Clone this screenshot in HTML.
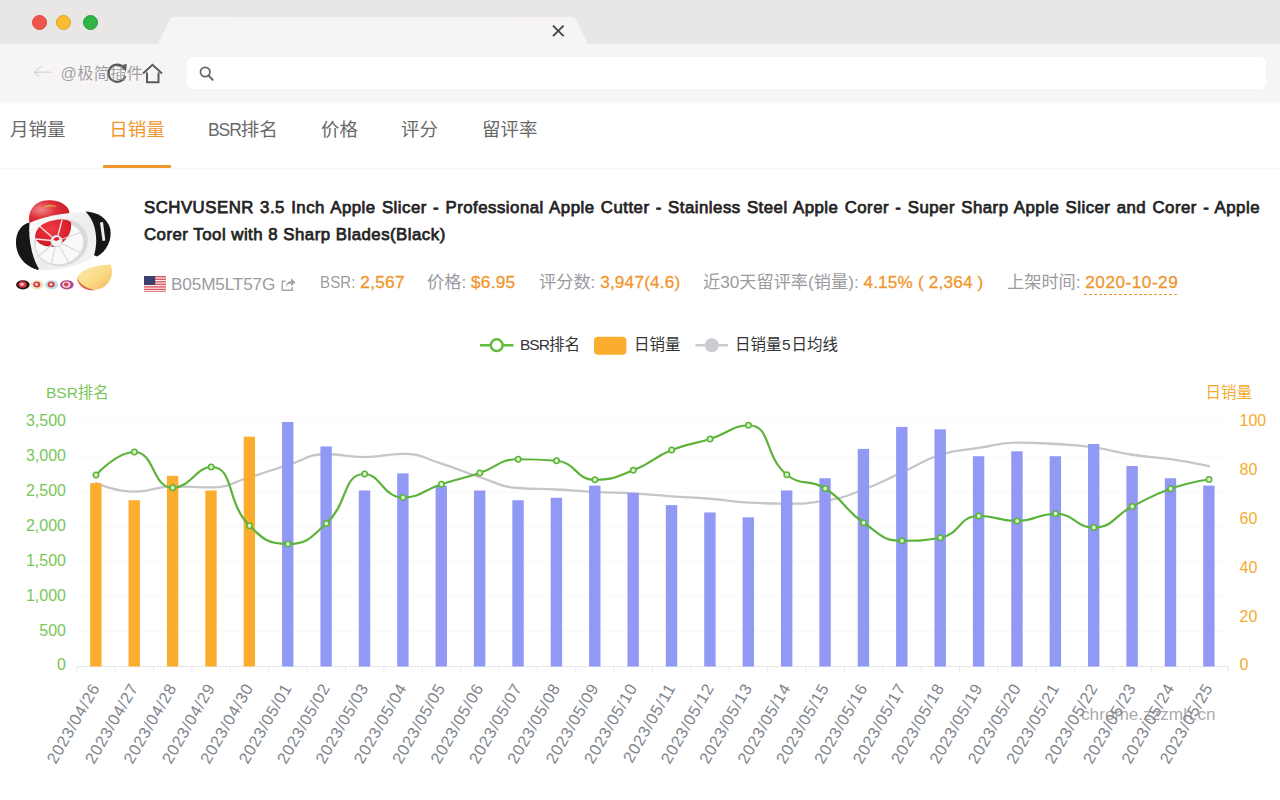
<!DOCTYPE html>
<html lang="zh-CN">
<head>
<meta charset="utf-8">
<title>日销量</title>
<style>
*{box-sizing:border-box;margin:0;padding:0}
html,body{width:1280px;height:800px;overflow:hidden;background:#fff}
body{position:relative;font-family:"Liberation Sans","Noto Sans CJK SC",sans-serif;color:#333}
.abs{position:absolute}
#titlebar{left:0;top:0;width:1280px;height:45px;background:#e9e7e6}
#toolbar{left:0;top:44px;width:1280px;height:60px;background:linear-gradient(#f7f4f6 0,#f7f4f6 57.500px,#fcfbfc 60px)}
#tab{left:0;top:0}
.dot{width:15px;height:15px;border-radius:50%;top:15.200px}
#addr{left:187px;top:57px;width:1078.500px;height:32.200px;background:#fff;border-radius:6px}
.wm{color:rgba(120,120,124,.75);white-space:nowrap}
#tabs{left:0;top:104px;width:1280px;height:65px;border-bottom:1px solid #f6f5f7;background:#fff}
.tab{top:14.300px;height:24px;line-height:24px;font-size:18.5px;color:#6a6a6a;white-space:nowrap}
.tab.on{color:#f0962e}
.tab .lat{font-size:17.500px;letter-spacing:-1.100px}
#ul{left:103px;top:164.700px;width:68px;height:3px;background:#f0962e;border-radius:1px}
#title .l1{text-align-last:justify;white-space:nowrap}
#title .l2{white-space:nowrap}
#title{left:144px;top:194px;width:1116px;font-weight:normal;-webkit-text-stroke:.75px #262626;font-size:16.8px;letter-spacing:.5px;line-height:27px;color:#222;text-align:justify}
.info{top:270px;height:24px;line-height:24px;font-size:17.2px;white-space:nowrap;color:#9b9b9f}
.o{color:#f0962e;letter-spacing:.5px;-webkit-text-stroke:.3px #f0962e}
.info .lat{display:inline-block;transform:scaleX(.885);transform-origin:0 50%;margin-right:-4.6px}
.lg{top:333px;height:24px;line-height:24px;font-size:15.5px;color:#333;white-space:nowrap}
svg.chart{position:absolute;left:0;top:360px}
svg text{font-family:"Liberation Sans","Noto Sans CJK SC",sans-serif}
.yl{fill:#78c757;font-size:16px}
.yr{fill:#f6ab2d;font-size:16px}
.tt{font-size:15.5px}
.xl{fill:#80848c;font-size:16.3px;letter-spacing:.8px}
</style>
</head>
<body>
<div id="titlebar" class="abs"></div>
<div id="toolbar" class="abs"></div>
<div id="addr" class="abs"></div>
<svg id="tab" class="abs" width="1280" height="110" viewBox="0 0 1280 110">
  <path d="M157.500 44.500 L170.800 18 Q171.500 16.800 173 16.800 L572 17.200 Q574.500 17.200 575.500 19 L588 44.500 Z" fill="#f7f4f7"/>
  <path d="M553 25.600 L563.600 36.200 M563.600 25.600 L553 36.200" stroke="#454547" stroke-width="1.9" fill="none"/>
  <!-- back arrow -->
  <path d="M34.500 72.300 L51 72.300 M41.500 66 L34.500 72.300 L39 76.500" stroke="#dcdadd" stroke-width="1.5" fill="none"/>
  <!-- reload -->
  <path d="M124 68 A8.600 8.600 0 1 0 125.300 76" stroke="#58585a" stroke-width="2.1" fill="none"/>
  <path d="M119.500 65.500 L126.800 64 L126 71.800 Z" fill="#58585a"/>
  <!-- home -->
  <path d="M143 73.500 L152.500 64.800 L162 73.500 M147 72.500 L147 82.300 L158.500 82.300 L158.500 72.500" stroke="#5a5a5c" stroke-width="2" fill="none" stroke-linejoin="miter"/>
  <!-- search -->
  <circle cx="205.200" cy="72" r="4.700" stroke="#666" stroke-width="1.8" fill="none"/>
  <path d="M208.700 75.600 L212.600 79.700" stroke="#666" stroke-width="2" stroke-linecap="round"/>
</svg>
<div class="abs dot" style="left:32px;background:#f2544e;border:1px solid #de4640"></div>
<div class="abs dot" style="left:56.300px;background:#fbbc2f;border:1px solid #dfa224"></div>
<div class="abs dot" style="left:83.100px;background:#2fb446;border:1px solid #279c3a"></div>
<div class="abs wm" style="left:60.500px;top:62px;font-size:16px;letter-spacing:.5px;line-height:24px;color:rgba(135,135,140,.78)">@极简插件</div>

<div id="tabs" class="abs">
  <div class="abs tab" style="left:10px">月销量</div>
  <div class="abs tab on" style="left:109.300px">日销量</div>
  <div class="abs tab" style="left:208px"><span class="lat">BSR</span>排名</div>
  <div class="abs tab" style="left:321px">价格</div>
  <div class="abs tab" style="left:401px">评分</div>
  <div class="abs tab" style="left:482px">留评率</div>
</div>
<div id="ul" class="abs"></div>

<svg class="abs" style="left:0;top:185px" width="130" height="120" viewBox="0 185 130 120">
  <defs>
    <radialGradient id="ap" cx="30%" cy="40%" r="80%"><stop offset="0" stop-color="#f08a8c"/><stop offset=".45" stop-color="#e0303a"/><stop offset="1" stop-color="#c21722"/></radialGradient>
    <radialGradient id="ap2" cx="45%" cy="35%" r="75%"><stop offset="0" stop-color="#ee3c45"/><stop offset=".7" stop-color="#d81f2b"/><stop offset="1" stop-color="#b9141f"/></radialGradient>
    <linearGradient id="rg" x1="0" y1="0" x2="1" y2="1"><stop offset="0" stop-color="#fdfdfd"/><stop offset=".55" stop-color="#ececee"/><stop offset="1" stop-color="#f7f7f8"/></linearGradient>
    <linearGradient id="sl" x1="0" y1="0" x2="1" y2="1"><stop offset="0" stop-color="#fceab0"/><stop offset=".55" stop-color="#fadb86"/><stop offset="1" stop-color="#f3b458"/></linearGradient>
    <filter id="sb" x="-10%" y="-10%" width="120%" height="120%"><feGaussianBlur stdDeviation=".4"/></filter>
  </defs>
  <g filter="url(#sb)">
  <!-- apple behind -->
  <path d="M29.500 223 C27 210 36 200.500 48 200.300 C60 200 70 206 69.500 214 L60 220 L36 224 Z" fill="url(#ap)"/>
  <path d="M43 208 C46 204 53 203.500 57 207 C53 206 47 206.500 43 208 Z" fill="#d8a44a"/>
  <!-- left black handle -->
  <path d="M30 222.500 C21 224 15.500 233 16 244 C16.500 256 25 266.500 38 270 L41 266 L31 224 Z" fill="#141414"/>
  <!-- right black handle -->
  <path d="M86 211.500 C97 212 107.500 218 110.300 229 C112 240 107 251 97 256.500 L91 254 L84 215 Z" fill="#141414"/>
  <path d="M100 222.500 L103 222 L105.300 240.500 L102.500 241 Z" fill="#ededed"/>
  <!-- white ring body -->
  <path d="M29.500 223 C42 217 64 212 86 212 C96 222 99 241 93.500 257 C84 264 58 272 39.500 270 C32 258 28 239 29.500 223 Z" fill="url(#rg)"/>
  <!-- inner opening -->
  <ellipse cx="61" cy="242.500" rx="27" ry="23.500" transform="rotate(-14 61 242.500)" fill="#d9d9dc"/>
  <ellipse cx="59.500" cy="243.500" rx="24" ry="20.500" transform="rotate(-14 59.500 243.500)" fill="#f9f9fa"/>
  <!-- apple inside -->
  <path d="M35.500 239 C33.500 229 43 221.500 57 219.800 C64 219 69 220 71 222.500 C72 231 68 239 61 243.500 L55 246.500 C47 247.500 39 245 35.500 239 Z" fill="url(#ap2)"/>
  <!-- blades -->
  <g stroke="#fae6e6" stroke-width="1.300" fill="none">
    <path d="M56.500 241 L40 226.500"/><path d="M56.500 241 L62 220"/><path d="M56.500 241 L35.500 239"/>
  </g>
  <g stroke="#d8d8dc" stroke-width="1.100" fill="none">
    <path d="M56.500 241 L82 232"/><path d="M56.500 241 L81 253"/><path d="M56.500 241 L69 263"/><path d="M56.500 241 L51 265"/><path d="M56.500 241 L38.500 256"/>
  </g>
  <circle cx="56.500" cy="241" r="5.600" fill="#f4f4f5" stroke="#cfcfd2" stroke-width="1"/>
  <path d="M53.300 240 A3.400 3.400 0 0 1 59.800 239.200 L56.500 241 Z" fill="#d6202d"/>
  <!-- slice -->
  <path d="M77 277 C81 270 94 265 110.500 264.500 C114 271 111.500 282 103 287.500 C94 291.500 83 290 78.500 284 Z" fill="url(#sl)"/>
  <path d="M77 277.500 C79.500 284 86 289 96 290 C88 291.500 78.500 288 77 277.500 Z" fill="#dd5e4c"/>
  <!-- thumbs -->
  <g>
    <ellipse cx="22.900" cy="284.800" rx="6.800" ry="4.600" fill="#2a1416"/><ellipse cx="22.500" cy="284.500" rx="4" ry="3.300" fill="#e23a46"/><ellipse cx="22" cy="284.300" rx="1.800" ry="1.500" fill="#f6c4c4"/>
    <ellipse cx="37.300" cy="284.800" rx="6.800" ry="4.600" fill="#eee8bc"/><ellipse cx="36.800" cy="284.600" rx="3.600" ry="3" fill="#d8404a"/><ellipse cx="36.500" cy="284.400" rx="1.500" ry="1.300" fill="#f4d6d6"/>
    <ellipse cx="51.700" cy="284.800" rx="6.800" ry="4.600" fill="#bde4ee"/><ellipse cx="51.200" cy="284.600" rx="3.600" ry="3" fill="#d8404a"/><ellipse cx="51" cy="284.400" rx="1.500" ry="1.300" fill="#f4d6d6"/>
    <ellipse cx="66.900" cy="284.800" rx="6.800" ry="4.600" fill="#b24a8c"/><ellipse cx="66.400" cy="284.600" rx="4" ry="3.200" fill="#f4dfe6"/><ellipse cx="66.200" cy="284.500" rx="2.300" ry="2" fill="#d8404a"/>
  </g>
  </g>
</svg>


<div id="title" class="abs"><div class="l1">SCHVUSENR 3.5 Inch Apple Slicer - Professional Apple Cutter - Stainless Steel Apple Corer - Super Sharp Apple Slicer and Corer - Apple</div><div class="l2"><span id="l2s">Corer Tool with 8 Sharp Blades(Black)</span></div></div>

<svg class="abs" style="left:143.700px;top:275.800px" width="22.200" height="16.700" viewBox="0 0 22.200 16.700">
  <rect width="22.200" height="16.700" fill="#fdf3f3"/>
  <g fill="#dc5563"><rect y="0" width="22.200" height="1.400"/><rect y="2.550" width="22.200" height="1.400"/><rect y="5.100" width="22.200" height="1.400"/><rect y="7.650" width="22.200" height="1.400"/><rect y="10.200" width="22.200" height="1.400"/><rect y="12.750" width="22.200" height="1.400"/><rect y="15.300" width="22.200" height="1.400"/></g>
  <rect width="11.200" height="9" fill="#3b416f"/>
</svg>
<div class="abs info" style="left:171px;top:271.600px;letter-spacing:-.15px">B05M5LT57G</div>
<svg class="abs" style="left:280px;top:276px" width="17" height="17" viewBox="0 0 17 17" fill="none" stroke="#a6a6aa" stroke-width="1.400">
  <path d="M5.500 5.300 L2.300 5.300 L2.300 14.300 L12.300 14.300 L12.300 11"/>
  <path d="M5.800 11.300 C6 7.600 8.200 5.300 11 5.100 L11 2.300 L15.600 6.300 L11 10.300 L11 7.600 C8.800 7.600 7 8.800 5.800 11.300 Z" fill="#a6a6aa" stroke="none"/>
</svg>
<div class="abs info" style="left:320px"><span class="lat">BSR:</span> <span class="o" style="letter-spacing:.3px">2,567</span></div>
<div class="abs info" style="left:427px">价格: <span class="o" style="letter-spacing:.3px">$6.95</span></div>
<div class="abs info" style="left:539px">评分数: <span class="o" style="letter-spacing:.2px">3,947(4.6)</span></div>
<div class="abs info" style="left:703px">近30天留评率(销量): <span class="o" style="letter-spacing:.17px">4.15% ( 2,364 )</span></div>
<div class="abs info" style="left:1007px">上架时间: <span class="o" id="dt">2020-10-29</span></div>
<div class="abs" style="left:1084px;top:293.600px;width:93px;height:0;border-top:1px dashed #f0962e"></div>

<!-- legend -->
<svg class="abs" style="left:470px;top:330px" width="280" height="30" viewBox="470 330 280 30">
  <line x1="480" x2="513.500" y1="345.200" y2="345.200" stroke="#62bb3f" stroke-width="2.600"/>
  <circle cx="496.700" cy="345.200" r="5.900" fill="#fff" stroke="#62bb3f" stroke-width="2.500"/>
  <rect x="594" y="336.800" width="32.400" height="18" rx="4" fill="#fbae2e"/>
  <line x1="695.500" x2="728" y1="345.200" y2="345.200" stroke="#cbccd1" stroke-width="2.600"/>
  <circle cx="711.800" cy="345.200" r="7" fill="#cbccd1"/>
</svg>
<div class="abs lg" style="left:520px"><span style="letter-spacing:-1px">BSR</span>排名</div>
<div class="abs lg" style="left:634px">日销量</div>
<div class="abs lg" style="left:735px">日销量<span style="letter-spacing:.8px;margin-left:.5px">5</span>日均线</div>

<svg class="chart" width="1280" height="440" viewBox="0 360 1280 440">
<line x1="76.8" x2="1228.2" y1="631.57" y2="631.57" stroke="#f9f9fb" stroke-width="1"/>
<line x1="76.8" x2="1228.2" y1="596.64" y2="596.64" stroke="#f9f9fb" stroke-width="1"/>
<line x1="76.8" x2="1228.2" y1="561.71" y2="561.71" stroke="#f9f9fb" stroke-width="1"/>
<line x1="76.8" x2="1228.2" y1="526.79" y2="526.79" stroke="#f9f9fb" stroke-width="1"/>
<line x1="76.8" x2="1228.2" y1="491.86" y2="491.86" stroke="#f9f9fb" stroke-width="1"/>
<line x1="76.8" x2="1228.2" y1="456.93" y2="456.93" stroke="#f9f9fb" stroke-width="1"/>
<line x1="76.8" x2="1228.2" y1="422.00" y2="422.00" stroke="#f9f9fb" stroke-width="1"/>
<line x1="76.8" x2="1228.2" y1="666.5" y2="666.5" stroke="#e6e7ec" stroke-width="1"/>
<line x1="76.80" x2="76.80" y1="666.5" y2="671.5" stroke="#e6e7ec" stroke-width="1"/>
<line x1="115.18" x2="115.18" y1="666.5" y2="671.5" stroke="#e6e7ec" stroke-width="1"/>
<line x1="153.56" x2="153.56" y1="666.5" y2="671.5" stroke="#e6e7ec" stroke-width="1"/>
<line x1="191.94" x2="191.94" y1="666.5" y2="671.5" stroke="#e6e7ec" stroke-width="1"/>
<line x1="230.32" x2="230.32" y1="666.5" y2="671.5" stroke="#e6e7ec" stroke-width="1"/>
<line x1="268.70" x2="268.70" y1="666.5" y2="671.5" stroke="#e6e7ec" stroke-width="1"/>
<line x1="307.08" x2="307.08" y1="666.5" y2="671.5" stroke="#e6e7ec" stroke-width="1"/>
<line x1="345.46" x2="345.46" y1="666.5" y2="671.5" stroke="#e6e7ec" stroke-width="1"/>
<line x1="383.84" x2="383.84" y1="666.5" y2="671.5" stroke="#e6e7ec" stroke-width="1"/>
<line x1="422.22" x2="422.22" y1="666.5" y2="671.5" stroke="#e6e7ec" stroke-width="1"/>
<line x1="460.60" x2="460.60" y1="666.5" y2="671.5" stroke="#e6e7ec" stroke-width="1"/>
<line x1="498.98" x2="498.98" y1="666.5" y2="671.5" stroke="#e6e7ec" stroke-width="1"/>
<line x1="537.36" x2="537.36" y1="666.5" y2="671.5" stroke="#e6e7ec" stroke-width="1"/>
<line x1="575.74" x2="575.74" y1="666.5" y2="671.5" stroke="#e6e7ec" stroke-width="1"/>
<line x1="614.12" x2="614.12" y1="666.5" y2="671.5" stroke="#e6e7ec" stroke-width="1"/>
<line x1="652.50" x2="652.50" y1="666.5" y2="671.5" stroke="#e6e7ec" stroke-width="1"/>
<line x1="690.88" x2="690.88" y1="666.5" y2="671.5" stroke="#e6e7ec" stroke-width="1"/>
<line x1="729.26" x2="729.26" y1="666.5" y2="671.5" stroke="#e6e7ec" stroke-width="1"/>
<line x1="767.64" x2="767.64" y1="666.5" y2="671.5" stroke="#e6e7ec" stroke-width="1"/>
<line x1="806.02" x2="806.02" y1="666.5" y2="671.5" stroke="#e6e7ec" stroke-width="1"/>
<line x1="844.40" x2="844.40" y1="666.5" y2="671.5" stroke="#e6e7ec" stroke-width="1"/>
<line x1="882.78" x2="882.78" y1="666.5" y2="671.5" stroke="#e6e7ec" stroke-width="1"/>
<line x1="921.16" x2="921.16" y1="666.5" y2="671.5" stroke="#e6e7ec" stroke-width="1"/>
<line x1="959.54" x2="959.54" y1="666.5" y2="671.5" stroke="#e6e7ec" stroke-width="1"/>
<line x1="997.92" x2="997.92" y1="666.5" y2="671.5" stroke="#e6e7ec" stroke-width="1"/>
<line x1="1036.30" x2="1036.30" y1="666.5" y2="671.5" stroke="#e6e7ec" stroke-width="1"/>
<line x1="1074.68" x2="1074.68" y1="666.5" y2="671.5" stroke="#e6e7ec" stroke-width="1"/>
<line x1="1113.06" x2="1113.06" y1="666.5" y2="671.5" stroke="#e6e7ec" stroke-width="1"/>
<line x1="1151.44" x2="1151.44" y1="666.5" y2="671.5" stroke="#e6e7ec" stroke-width="1"/>
<line x1="1189.82" x2="1189.82" y1="666.5" y2="671.5" stroke="#e6e7ec" stroke-width="1"/>
<line x1="1228.20" x2="1228.20" y1="666.5" y2="671.5" stroke="#e6e7ec" stroke-width="1"/>
<path d="M95.99 483.12 C95.99 483.12 115.04 491.68 134.37 491.68 C153.42 491.68 153.47 486.38 172.75 486.38 C191.85 486.38 192.26 487.40 211.13 487.40 C230.64 487.40 230.46 482.81 249.51 477.26 C268.84 471.62 268.60 470.81 287.89 465.03 C306.98 459.32 306.75 454.27 326.27 454.27 C345.13 454.27 345.47 457.21 364.65 457.21 C383.85 457.21 384.10 453.78 403.03 453.78 C422.48 453.78 422.49 457.78 441.41 463.56 C460.87 469.52 460.39 471.08 479.79 477.26 C498.77 483.30 498.62 486.49 518.17 488.01 C537.00 489.48 537.37 488.50 556.55 489.48 C575.75 490.46 575.73 490.95 594.93 491.93 C614.11 492.90 614.14 492.29 633.31 493.39 C652.52 494.50 652.49 494.98 671.69 496.33 C690.87 497.67 690.91 497.19 710.07 498.77 C729.29 500.36 729.21 501.70 748.45 502.69 C767.59 503.66 767.66 503.66 786.83 503.66 C806.04 503.66 806.39 503.66 825.21 500.73 C844.77 497.68 844.87 496.40 863.59 489.48 C883.25 482.22 882.83 481.03 901.97 472.37 C921.21 463.67 920.39 461.12 940.35 454.76 C958.77 448.89 959.48 450.98 978.73 447.92 C997.86 444.87 997.83 442.54 1017.11 442.54 C1036.21 442.54 1036.33 442.78 1055.49 444.00 C1074.71 445.23 1074.81 444.76 1093.87 447.43 C1113.19 450.14 1112.95 451.81 1132.25 454.76 C1151.33 457.68 1151.53 456.37 1170.63 459.16 C1189.91 461.99 1209.01 466.01 1209.01 466.01" fill="none" stroke="#c6c6ca" stroke-width="2.3" stroke-linecap="round"/>
<rect x="90.14" y="483.12" width="11.4" height="183.38" fill="#fbae2e"/>
<rect x="128.52" y="500.24" width="11.4" height="166.26" fill="#fbae2e"/>
<rect x="166.90" y="475.79" width="11.4" height="190.71" fill="#fbae2e"/>
<rect x="205.28" y="490.46" width="11.4" height="176.04" fill="#fbae2e"/>
<rect x="243.66" y="436.67" width="11.4" height="229.83" fill="#fbae2e"/>
<rect x="282.04" y="422.00" width="11.4" height="244.50" fill="#9299f5"/>
<rect x="320.42" y="446.45" width="11.4" height="220.05" fill="#9299f5"/>
<rect x="358.80" y="490.46" width="11.4" height="176.04" fill="#9299f5"/>
<rect x="397.18" y="473.35" width="11.4" height="193.15" fill="#9299f5"/>
<rect x="435.56" y="485.57" width="11.4" height="180.93" fill="#9299f5"/>
<rect x="473.94" y="490.46" width="11.4" height="176.04" fill="#9299f5"/>
<rect x="512.32" y="500.24" width="11.4" height="166.26" fill="#9299f5"/>
<rect x="550.70" y="497.79" width="11.4" height="168.71" fill="#9299f5"/>
<rect x="589.08" y="485.57" width="11.4" height="180.93" fill="#9299f5"/>
<rect x="627.46" y="492.90" width="11.4" height="173.60" fill="#9299f5"/>
<rect x="665.84" y="505.13" width="11.4" height="161.37" fill="#9299f5"/>
<rect x="704.22" y="512.47" width="11.4" height="154.03" fill="#9299f5"/>
<rect x="742.60" y="517.36" width="11.4" height="149.14" fill="#9299f5"/>
<rect x="780.98" y="490.46" width="11.4" height="176.04" fill="#9299f5"/>
<rect x="819.36" y="478.24" width="11.4" height="188.26" fill="#9299f5"/>
<rect x="857.74" y="448.89" width="11.4" height="217.61" fill="#9299f5"/>
<rect x="896.12" y="426.89" width="11.4" height="239.61" fill="#9299f5"/>
<rect x="934.50" y="429.34" width="11.4" height="237.16" fill="#9299f5"/>
<rect x="972.88" y="456.23" width="11.4" height="210.27" fill="#9299f5"/>
<rect x="1011.26" y="451.34" width="11.4" height="215.16" fill="#9299f5"/>
<rect x="1049.64" y="456.23" width="11.4" height="210.27" fill="#9299f5"/>
<rect x="1088.02" y="444.00" width="11.4" height="222.50" fill="#9299f5"/>
<rect x="1126.40" y="466.01" width="11.4" height="200.49" fill="#9299f5"/>
<rect x="1164.78" y="478.24" width="11.4" height="188.26" fill="#9299f5"/>
<rect x="1203.16" y="485.57" width="11.4" height="180.93" fill="#9299f5"/>
<path d="M95.99 475.00 C95.99 475.00 116.70 452.00 134.37 452.00 C155.08 452.00 151.80 487.75 172.75 487.75 C190.18 487.75 196.42 467.00 211.13 467.00 C234.80 467.00 225.61 501.77 249.51 525.75 C263.99 540.27 268.93 544.00 287.89 544.00 C307.31 544.00 310.54 537.85 326.27 523.50 C348.92 502.85 342.32 474.00 364.65 474.00 C380.70 474.00 382.85 497.50 403.03 497.50 C421.23 497.50 422.08 490.42 441.41 484.25 C460.46 478.17 460.78 479.19 479.79 473.00 C499.16 466.69 498.41 459.25 518.17 459.25 C536.79 459.25 538.40 459.25 556.55 460.75 C576.78 462.42 574.97 479.75 594.93 479.75 C613.35 479.75 615.01 477.34 633.31 470.25 C653.39 462.47 651.70 458.14 671.69 450.00 C690.08 442.51 691.08 445.12 710.07 439.00 C729.46 432.75 733.32 425.25 748.45 425.25 C771.70 425.25 763.58 455.59 786.83 474.75 C801.96 487.22 808.24 477.89 825.21 488.50 C846.62 501.89 842.55 508.43 863.59 522.75 C880.93 534.55 881.86 540.75 901.97 540.75 C920.24 540.75 922.46 540.75 940.35 537.75 C960.84 534.31 958.29 516.00 978.73 516.00 C996.67 516.00 998.01 521.00 1017.11 521.00 C1036.39 521.00 1036.71 513.75 1055.49 513.75 C1075.09 513.75 1075.36 527.50 1093.87 527.50 C1113.74 527.50 1112.73 516.35 1132.25 506.50 C1151.11 496.98 1150.78 495.73 1170.63 488.75 C1189.16 482.23 1209.01 479.50 1209.01 479.50" fill="none" stroke="#5cb33a" stroke-width="2.2" stroke-linecap="round" stroke-linejoin="round"/>
<circle cx="95.99" cy="475.00" r="2.7" fill="#d9f6ca" stroke="#5cb33a" stroke-width="1.6"/>
<circle cx="134.37" cy="452.00" r="2.7" fill="#d9f6ca" stroke="#5cb33a" stroke-width="1.6"/>
<circle cx="172.75" cy="487.75" r="2.7" fill="#d9f6ca" stroke="#5cb33a" stroke-width="1.6"/>
<circle cx="211.13" cy="467.00" r="2.7" fill="#d9f6ca" stroke="#5cb33a" stroke-width="1.6"/>
<circle cx="249.51" cy="525.75" r="2.7" fill="#d9f6ca" stroke="#5cb33a" stroke-width="1.6"/>
<circle cx="287.89" cy="544.00" r="2.7" fill="#d9f6ca" stroke="#5cb33a" stroke-width="1.6"/>
<circle cx="326.27" cy="523.50" r="2.7" fill="#d9f6ca" stroke="#5cb33a" stroke-width="1.6"/>
<circle cx="364.65" cy="474.00" r="2.7" fill="#d9f6ca" stroke="#5cb33a" stroke-width="1.6"/>
<circle cx="403.03" cy="497.50" r="2.7" fill="#d9f6ca" stroke="#5cb33a" stroke-width="1.6"/>
<circle cx="441.41" cy="484.25" r="2.7" fill="#d9f6ca" stroke="#5cb33a" stroke-width="1.6"/>
<circle cx="479.79" cy="473.00" r="2.7" fill="#d9f6ca" stroke="#5cb33a" stroke-width="1.6"/>
<circle cx="518.17" cy="459.25" r="2.7" fill="#d9f6ca" stroke="#5cb33a" stroke-width="1.6"/>
<circle cx="556.55" cy="460.75" r="2.7" fill="#d9f6ca" stroke="#5cb33a" stroke-width="1.6"/>
<circle cx="594.93" cy="479.75" r="2.7" fill="#d9f6ca" stroke="#5cb33a" stroke-width="1.6"/>
<circle cx="633.31" cy="470.25" r="2.7" fill="#d9f6ca" stroke="#5cb33a" stroke-width="1.6"/>
<circle cx="671.69" cy="450.00" r="2.7" fill="#d9f6ca" stroke="#5cb33a" stroke-width="1.6"/>
<circle cx="710.07" cy="439.00" r="2.7" fill="#d9f6ca" stroke="#5cb33a" stroke-width="1.6"/>
<circle cx="748.45" cy="425.25" r="2.7" fill="#d9f6ca" stroke="#5cb33a" stroke-width="1.6"/>
<circle cx="786.83" cy="474.75" r="2.7" fill="#d9f6ca" stroke="#5cb33a" stroke-width="1.6"/>
<circle cx="825.21" cy="488.50" r="2.7" fill="#d9f6ca" stroke="#5cb33a" stroke-width="1.6"/>
<circle cx="863.59" cy="522.75" r="2.7" fill="#d9f6ca" stroke="#5cb33a" stroke-width="1.6"/>
<circle cx="901.97" cy="540.75" r="2.7" fill="#d9f6ca" stroke="#5cb33a" stroke-width="1.6"/>
<circle cx="940.35" cy="537.75" r="2.7" fill="#d9f6ca" stroke="#5cb33a" stroke-width="1.6"/>
<circle cx="978.73" cy="516.00" r="2.7" fill="#d9f6ca" stroke="#5cb33a" stroke-width="1.6"/>
<circle cx="1017.11" cy="521.00" r="2.7" fill="#d9f6ca" stroke="#5cb33a" stroke-width="1.6"/>
<circle cx="1055.49" cy="513.75" r="2.7" fill="#d9f6ca" stroke="#5cb33a" stroke-width="1.6"/>
<circle cx="1093.87" cy="527.50" r="2.7" fill="#d9f6ca" stroke="#5cb33a" stroke-width="1.6"/>
<circle cx="1132.25" cy="506.50" r="2.7" fill="#d9f6ca" stroke="#5cb33a" stroke-width="1.6"/>
<circle cx="1170.63" cy="488.75" r="2.7" fill="#d9f6ca" stroke="#5cb33a" stroke-width="1.6"/>
<circle cx="1209.01" cy="479.50" r="2.7" fill="#d9f6ca" stroke="#5cb33a" stroke-width="1.6"/>
<text x="66" y="670.4" text-anchor="end" class="yl">0</text>
<text x="66" y="635.5" text-anchor="end" class="yl">500</text>
<text x="66" y="600.5" text-anchor="end" class="yl">1,000</text>
<text x="66" y="565.6" text-anchor="end" class="yl">1,500</text>
<text x="66" y="530.7" text-anchor="end" class="yl">2,000</text>
<text x="66" y="495.8" text-anchor="end" class="yl">2,500</text>
<text x="66" y="460.8" text-anchor="end" class="yl">3,000</text>
<text x="66" y="425.9" text-anchor="end" class="yl">3,500</text>
<text x="1239.5" y="670.4" class="yr">0</text>
<text x="1239.5" y="621.5" class="yr">20</text>
<text x="1239.5" y="572.6" class="yr">40</text>
<text x="1239.5" y="523.7" class="yr">60</text>
<text x="1239.5" y="474.8" class="yr">80</text>
<text x="1239.5" y="425.9" class="yr">100</text>
<text x="46" y="398" class="yl tt">BSR排名</text>
<text x="1252" y="398" text-anchor="end" class="yr tt">日销量</text>
<text transform="translate(100.49 687.50) rotate(-60)" text-anchor="end" class="xl">2023/04/26</text>
<text transform="translate(138.87 687.50) rotate(-60)" text-anchor="end" class="xl">2023/04/27</text>
<text transform="translate(177.25 687.50) rotate(-60)" text-anchor="end" class="xl">2023/04/28</text>
<text transform="translate(215.63 687.50) rotate(-60)" text-anchor="end" class="xl">2023/04/29</text>
<text transform="translate(254.01 687.50) rotate(-60)" text-anchor="end" class="xl">2023/04/30</text>
<text transform="translate(292.39 687.50) rotate(-60)" text-anchor="end" class="xl">2023/05/01</text>
<text transform="translate(330.77 687.50) rotate(-60)" text-anchor="end" class="xl">2023/05/02</text>
<text transform="translate(369.15 687.50) rotate(-60)" text-anchor="end" class="xl">2023/05/03</text>
<text transform="translate(407.53 687.50) rotate(-60)" text-anchor="end" class="xl">2023/05/04</text>
<text transform="translate(445.91 687.50) rotate(-60)" text-anchor="end" class="xl">2023/05/05</text>
<text transform="translate(484.29 687.50) rotate(-60)" text-anchor="end" class="xl">2023/05/06</text>
<text transform="translate(522.67 687.50) rotate(-60)" text-anchor="end" class="xl">2023/05/07</text>
<text transform="translate(561.05 687.50) rotate(-60)" text-anchor="end" class="xl">2023/05/08</text>
<text transform="translate(599.43 687.50) rotate(-60)" text-anchor="end" class="xl">2023/05/09</text>
<text transform="translate(637.81 687.50) rotate(-60)" text-anchor="end" class="xl">2023/05/10</text>
<text transform="translate(676.19 687.50) rotate(-60)" text-anchor="end" class="xl">2023/05/11</text>
<text transform="translate(714.57 687.50) rotate(-60)" text-anchor="end" class="xl">2023/05/12</text>
<text transform="translate(752.95 687.50) rotate(-60)" text-anchor="end" class="xl">2023/05/13</text>
<text transform="translate(791.33 687.50) rotate(-60)" text-anchor="end" class="xl">2023/05/14</text>
<text transform="translate(829.71 687.50) rotate(-60)" text-anchor="end" class="xl">2023/05/15</text>
<text transform="translate(868.09 687.50) rotate(-60)" text-anchor="end" class="xl">2023/05/16</text>
<text transform="translate(906.47 687.50) rotate(-60)" text-anchor="end" class="xl">2023/05/17</text>
<text transform="translate(944.85 687.50) rotate(-60)" text-anchor="end" class="xl">2023/05/18</text>
<text transform="translate(983.23 687.50) rotate(-60)" text-anchor="end" class="xl">2023/05/19</text>
<text transform="translate(1021.61 687.50) rotate(-60)" text-anchor="end" class="xl">2023/05/20</text>
<text transform="translate(1059.99 687.50) rotate(-60)" text-anchor="end" class="xl">2023/05/21</text>
<text transform="translate(1098.37 687.50) rotate(-60)" text-anchor="end" class="xl">2023/05/22</text>
<text transform="translate(1136.75 687.50) rotate(-60)" text-anchor="end" class="xl">2023/05/23</text>
<text transform="translate(1175.13 687.50) rotate(-60)" text-anchor="end" class="xl">2023/05/24</text>
<text transform="translate(1213.51 687.50) rotate(-60)" text-anchor="end" class="xl">2023/05/25</text>
</svg>

<div class="abs wm" style="left:1081px;top:702px;font-size:17.2px;line-height:24px;color:rgba(130,130,134,.7)">chrome.zzzmh.cn</div>
</body>
</html>
